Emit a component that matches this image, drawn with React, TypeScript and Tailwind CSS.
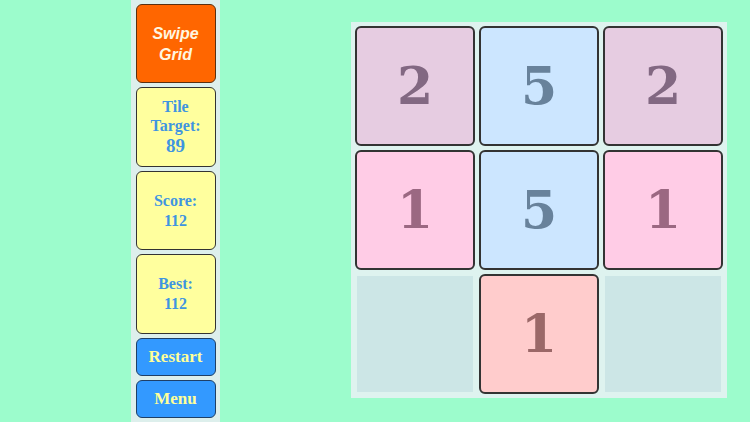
import React from 'react';

type Tile = { value: number; bg: string; fg: string } | null;

const serif = { fontFamily: '"Liberation Serif", "DejaVu Serif", serif' };
const tileFont = { fontFamily: '"DejaVu Serif", "Liberation Serif", serif' };

const tiles: Tile[] = [
  { value: 2, bg: 'bg-[#e6cce1]', fg: 'text-[#826882]' },
  { value: 5, bg: 'bg-[#cce6ff]', fg: 'text-[#68829b]' },
  { value: 2, bg: 'bg-[#e6cce1]', fg: 'text-[#826882]' },
  { value: 1, bg: 'bg-[#ffcce6]', fg: 'text-[#9b6882]' },
  { value: 5, bg: 'bg-[#cce6ff]', fg: 'text-[#68829b]' },
  { value: 1, bg: 'bg-[#ffcce6]', fg: 'text-[#9b6882]' },
  null,
  { value: 1, bg: 'bg-[#ffcccc]', fg: 'text-[#9b6868]' },
  null,
];

function InfoCard({ lines, h }: { lines: string[]; h: string }) {
  return (
    <div
      className={`${h} w-[80px] rounded-[6px] border-[1.5px] border-[#333] bg-[#ffff9e] flex flex-col items-center justify-center text-[16px] leading-[20px] font-bold text-[#3f95e0]`}
      style={serif}
    >
      {lines.map((l, i) => (
        <span key={i}>{l}</span>
      ))}
    </div>
  );
}

function BlueButton({ label }: { label: string }) {
  return (
    <button
      className="h-[38px] w-[80px] rounded-[6px] border-[1.5px] border-[#1f3f66] bg-[#3399ff] text-[17px] font-bold text-[#ffff99]"
      style={serif}
    >
      {label}
    </button>
  );
}

export default function App() {
  return (
    <div className="h-[422px] w-[750px] overflow-hidden bg-[#9cfccc] flex items-start">
      {/* Sidebar */}
      <div className="ml-[131px] h-[422px] w-[89px] bg-[#ddefec] flex flex-col items-center gap-[4px] pt-[4px]">
        <div
          className="h-[79px] w-[80px] rounded-[6px] border-[1.5px] border-[#5a3010] bg-[#ff6600] flex flex-col items-center justify-center text-[16px] leading-[21px] font-bold italic text-[#fff6e0]"
          style={{ fontFamily: '"Liberation Sans", "Noto Sans", sans-serif' }}
        >
          <span>Swipe</span>
          <span>Grid</span>
        </div>
        <div
          className="h-[80px] w-[80px] rounded-[6px] border-[1.5px] border-[#333] bg-[#ffff9e] flex flex-col items-center justify-center font-bold text-[#3f95e0]"
          style={serif}
        >
          <span className="text-[16px] leading-[19px]">Tile</span>
          <span className="text-[16px] leading-[19px]">Target:</span>
          <span className="text-[19px] leading-[22px]">89</span>
        </div>
        <InfoCard lines={['Score:', '112']} h="h-[79px]" />
        <InfoCard lines={['Best:', '112']} h="h-[80px]" />
        <BlueButton label="Restart" />
        <BlueButton label="Menu" />
      </div>

      {/* Board */}
      <div className="ml-[131px] mt-[22px] bg-[#def3ef] p-[4px] grid grid-cols-3 gap-[4px]">
        {tiles.map((t, i) =>
          t ? (
            <div
              key={i}
              className={`h-[120px] w-[120px] rounded-[6px] border-2 border-[#333] ${t.bg} flex items-center justify-center`}
            >
              <span className={`text-[52px] font-bold leading-none ${t.fg}`} style={tileFont}>
                {t.value}
              </span>
            </div>
          ) : (
            <div key={i} className="h-[120px] w-[120px] p-[2px]">
              <div className="h-full w-full bg-[#cce6e6]" />
            </div>
          )
        )}
      </div>
    </div>
  );
}
